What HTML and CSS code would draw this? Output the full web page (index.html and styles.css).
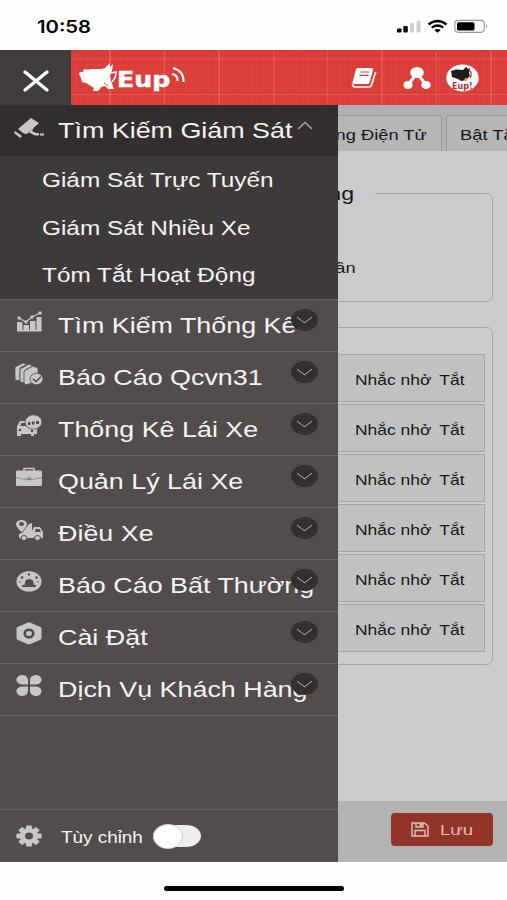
FILE: index.html
```html
<!DOCTYPE html>
<html lang="vi">
<head>
<meta charset="utf-8">
<title>Eup</title>
<link rel="stylesheet" href="styles.css">
</head>
<body>
<div class="phone">
  <div class="status">
    <span class="clock"><span class="t">10:58</span></span>
    <svg class="status-icons" width="92" height="16" viewBox="0 0 92 16">
      <rect x="0" y="9.500" width="4.500" height="4" rx="1"/><rect x="6.300" y="7" width="4.500" height="6.500" rx="1"/>
      <rect x="13" y="4" width="4" height="9.500" rx="1" fill="#d0d0d0"/><rect x="19.500" y="1.500" width="4" height="12" rx="1" fill="#d0d0d0"/>
      <g fill="none" stroke="#000" stroke-width="2.300"><path d="M31.500 5.500Q40.500-1.500 49.500 5.500"/><path d="M34.700 8.700Q40.500 4.300 46.300 8.700"/></g>
      <path d="M37.300 11Q40.500 8.800 43.700 11L40.500 13.800Z"/>
      <rect x="57.800" y="1.300" width="29.500" height="12" rx="3.500" fill="none" stroke="#999" stroke-width="1.200"/>
      <rect x="60" y="3.200" width="17.500" height="8.200" rx="1.500"/><path d="M89 5.300q2.200 2 0 4z" fill="#999"/>
    </svg>
  </div>

  <header class="header">
    <button class="close" aria-label="Đóng">
      <svg width="28" height="24" viewBox="0 0 28 24"><path d="M3 3L25 21M25 3L3 21" stroke="#fff" stroke-width="3.400" stroke-linecap="round"/></svg>
    </button>
    <div class="brand">
      <svg class="pig" width="38" height="30" viewBox="0 0 38 30">
        <path fill="#fff" d="M0 11Q0 8 4 9L5 6Q9 7 12 6H22L26 5L31 0L31 4L34 1L33 8L31 12L32 18L35 26H29L26 23L22 24L21 26L19 28H14L15 25L12 23L7 20L3 19L2 15Z"/>
        <path d="M32 10L37 9Q37 15 33 19" stroke="#fff" stroke-width="1.500" fill="none"/><path d="M25 20l4 3" stroke="#dc3c38"/>
      </svg>
      <span class="brand-name"><span>Eup</span></span>
      <svg class="waves" width="15" height="18" viewBox="0 0 15 18"><g fill="none" stroke="#fff" stroke-width="2"><path d="M1 8q6 1 5.500 7"/><path d="M2 2q11 3 10.500 14"/></g></svg>
    </div>
    <nav class="actions">
      <svg width="26" height="22" viewBox="0 0 26 22">
        <path d="M6.500 1H20.500Q22.500 1 22 3L18.500 15.500Q18 17 16.500 17H3Q1 17 1.500 15L5 2.500Q5.300 1 6.500 1Z" fill="#fff"/>
        <path d="M9.500 5H18.500M8.500 8.300H17.500" stroke="#dc3c38" stroke-width="1.200"/>
        <path d="M1.500 17Q1.500 20 4 20H18Q20 20 20.500 18L24.700 5" fill="none" stroke="#fff" stroke-width="1.700"/>
      </svg>
      <svg width="28" height="24" viewBox="0 0 28 24"><path d="M14 7L5 19M14 7L23 19" stroke="#fff" stroke-width="3"/><g fill="#fff"><ellipse cx="14" cy="6.500" rx="6.800" ry="5.500"/><ellipse cx="5" cy="19" rx="4.700" ry="4"/><ellipse cx="23" cy="19" rx="4.700" ry="4"/></g></svg>
      <svg width="33" height="28" viewBox="0 0 33 28">
        <ellipse cx="16.500" cy="14" rx="16.200" ry="13.500" fill="#fff"/>
        <path d="M5 7L10 5.500L17 6L20 3L22 5L24 4L23 9L24 12L20 16L15 17L12 15L6 13Z" fill="#231a1a"/>
        <path d="M23 6q4 3 1 8" fill="none" stroke="#cc3535" stroke-width="1.300"/><circle cx="20" cy="15.500" r="1.600" fill="#e5a431"/>
        <text x="6" y="24.500" class="mini">Eup!</text>
      </svg>
    </nav>
  </header>

  <main class="stage">
    <div class="page">
      <div class="tabs">
        <div class="tab first"><span class="t right">ng Điện Tử</span></div>
        <div class="tab second"><span class="t">Bật Tắt</span></div>
      </div>
      <div class="content">
        <section class="group top"><h2><span class="t right">ng</span></h2><p><span class="t right">ần</span></p></section>
        <section class="group list">
          <div class="remind"><span class="t">Nhắc nhở <i></i>Tắt</span></div>
          <div class="remind"><span class="t">Nhắc nhở <i></i>Tắt</span></div>
          <div class="remind"><span class="t">Nhắc nhở <i></i>Tắt</span></div>
          <div class="remind"><span class="t">Nhắc nhở <i></i>Tắt</span></div>
          <div class="remind"><span class="t">Nhắc nhở <i></i>Tắt</span></div>
          <div class="remind"><span class="t">Nhắc nhở <i></i>Tắt</span></div>
        </section>
      </div>
      <div class="savebar">
        <button class="save">
          <svg width="18" height="15" viewBox="0 0 18 15"><g fill="none" stroke="#dfbeb9" stroke-width="1.400"><path d="M1 1H13.500L17 4V14H1Z"/><path d="M4 14V8.500H14V14M5 1V5H12V1"/></g><path d="M8.500 1h3v3h-3z" fill="#dfbeb9"/></svg>
          <span class="t">Lưu</span>
        </button>
      </div>
    </div>

    <aside class="drawer">
      <div class="item open">
        <svg class="ico wide" width="31" height="22" viewBox="0 0 31 22"><g fill="#c9c7c6"><path d="M4 12L17 1L25 6L14 16Q12 18 9 16Z"/><path d="M1 14L8 19L6 21L0 16Z"/><path d="M20 10l-2 4 4 2h3v2.500h-4l-6-3z"/><path d="M26 16.500h4v2h-4z"/></g></svg>
        <span class="t">Tìm Kiếm Giám Sát</span>
        <svg class="up" width="16" height="9" viewBox="0 0 16 9"><path d="M1 8L8 1.500L15 8" fill="none" stroke="#aaa7a6" stroke-width="1.500"/></svg>
      </div>
      <div class="sub">
        <div class="subitem"><span class="t">Giám Sát Trực Tuyến</span></div>
        <div class="subitem"><span class="t">Giám Sát Nhiều Xe</span></div>
        <div class="subitem"><span class="t">Tóm Tắt Hoạt Động</span></div>
      </div>
      <div class="item">
        <svg class="ico" width="28" height="24" viewBox="0 0 28 24"><g fill="#c9c7c6"><path d="M2 12h5.500v9H2zM8.500 15h5.500v6h-5.500zM15 11h5.500v10h-5.500zM21.500 7h5v14h-5z"/><path d="M2 20h24.500v1.500H2z"/><circle cx="4" cy="8" r="1.700"/><circle cx="11" cy="12" r="1.700"/><circle cx="17" cy="7" r="1.700"/><circle cx="25" cy="3" r="1.800"/></g><path d="M4 8L11 12L17 7L25 3" fill="none" stroke="#c9c7c6" stroke-width="1.300"/></svg>
        <span class="t">Tìm Kiếm Thống Kê</span><span class="down"></span>
      </div>
      <div class="item">
        <svg class="ico" width="28" height="24" viewBox="0 0 28 24"><g fill="#c9c7c6" stroke="#524d4c" stroke-width=".8"><path d="M0 5L8 1L12 2L5 6V19L0 18Z"/><path d="M5 7L14 2L18 4L10 8V21L5 20Z"/><path d="M9 9L18 4L23 6V19L11 23L9 21Z"/><ellipse cx="21.500" cy="17" rx="6.500" ry="5.800"/></g><path d="M18 17l3 2.500 5-5" fill="none" stroke="#524d4c" stroke-width="1.500"/></svg>
        <span class="t">Báo Cáo Qcvn31</span><span class="down"></span>
      </div>
      <div class="item">
        <svg class="ico" width="28" height="24" viewBox="0 0 28 24"><path d="M2 12L5 7H12L15 13H22V20H19V22H16V20H6V22H2Z" fill="#c9c7c6"/><path d="M5 12l1.500-3H11l1.500 3z" fill="#524d4c"/><circle cx="5" cy="16" r="1.300" fill="#524d4c"/><circle cx="17" cy="17" r="1.300" fill="#524d4c"/><ellipse cx="18.500" cy="8" rx="8.500" ry="7.200" fill="#c9c7c6" stroke="#524d4c" stroke-width=".8"/><path d="M13 9.500h2.500M17 9h2.500M21 8.500h3" stroke="#524d4c" stroke-width="3"/></svg>
        <span class="t">Thống Kê Lái Xe</span><span class="down"></span>
      </div>
      <div class="item">
        <svg class="ico" width="28" height="24" viewBox="0 0 28 24"><path d="M9 5V2.500H19V5" fill="none" stroke="#c9c7c6" stroke-width="1.500"/><path d="M2 4.500H25.500Q27 4.500 27 6V18.500Q27 20 25.500 20H2Q1 20 1 18.500V6Q1 4.500 2 4.500Z" fill="#c9c7c6"/><path d="M1 11.500Q14 15.500 27 11.500" fill="none" stroke="#8c8887"/><ellipse cx="14" cy="12.700" rx="2.500" ry="1.500" fill="#8c8887"/></svg>
        <span class="t">Quản Lý Lái Xe</span><span class="down"></span>
      </div>
      <div class="item">
        <svg class="ico" width="28" height="24" viewBox="0 0 28 24"><path d="M1 6A5.600 4.800 0 0 1 12 6Q12 9 6.500 14Q1 9 1 6Z" fill="#c9c7c6"/><ellipse cx="6.500" cy="6" rx="2.500" ry="2.100" fill="#524d4c"/><path d="M7 15L14 6L17 5V13L19 9H25L28 14V20H4V16Z" fill="#c9c7c6"/><path d="M20.500 11h4l1.500 3h-6z" fill="#524d4c"/><g fill="#c9c7c6" stroke="#524d4c"><ellipse cx="9" cy="20" rx="3" ry="2.500"/><ellipse cx="22.500" cy="20" rx="3" ry="2.500"/></g></svg>
        <span class="t">Điều Xe</span><span class="down"></span>
      </div>
      <div class="item">
        <svg class="ico" width="28" height="24" viewBox="0 0 28 24"><ellipse cx="14" cy="11.500" rx="12.500" ry="10.300" fill="#c9c7c6"/><g fill="#524d4c"><path d="M7 17H21V15H19L18 10.500Q14 7.500 10.500 10.500L9.500 15H7Z"/><circle cx="14" cy="4.500" r="1.200"/><circle cx="7" cy="7.500" r="1.300"/><circle cx="21.500" cy="7.500" r="1.300"/><circle cx="5" cy="12" r=".8"/><circle cx="23" cy="12" r=".8"/></g></svg>
        <span class="t">Báo Cáo Bất Thường</span><span class="down"></span>
      </div>
      <div class="item">
        <svg class="ico" width="28" height="24" viewBox="0 0 28 24"><path d="M12.500 .7Q14 0 15.500 .7L25.500 5Q26.500 5.500 26.500 7V16Q26.500 17.200 25.500 17.700L15.500 22Q14 22.700 12.500 22L2.500 17.700Q1.500 17.200 1.500 16V7Q1.500 5.500 2.500 5Z" fill="#c9c7c6"/><ellipse cx="14" cy="11.500" rx="4.300" ry="3.800" fill="none" stroke="#524d4c" stroke-width="2.600"/></svg>
        <span class="t">Cài Đặt</span><span class="down"></span>
      </div>
      <div class="item">
        <svg class="ico" width="28" height="24" viewBox="0 0 28 24"><g fill="#c9c7c6"><path d="M13 10.500V6A5.800 4.700 0 1 0 7 10.500Z"/><path d="M15 10.500V6A5.800 4.700 0 1 1 21 10.500Z"/><path d="M13 12.500V17A5.800 4.700 0 1 1 7 12.500Z"/><path d="M15 12.500V17A5.800 4.700 0 1 0 21 12.500Z"/></g></svg>
        <span class="t">Dịch Vụ Khách Hàng</span><span class="down"></span>
      </div>
      <div class="drawer-foot">
        <svg class="gear" width="28" height="24" viewBox="-14 -12 28 24"><g fill="#c9c7c6" transform="scale(1.200 1)"><rect x="-2.500" y="-10.500" width="5" height="21" rx="1"/><rect x="-2.500" y="-10.500" width="5" height="21" rx="1" transform="rotate(45)"/><rect x="-2.500" y="-10.500" width="5" height="21" rx="1" transform="rotate(90)"/><rect x="-2.500" y="-10.500" width="5" height="21" rx="1" transform="rotate(135)"/><circle r="7.800"/></g><ellipse rx="4" ry="3.400" fill="#524d4c"/></svg>
        <span class="t">Tùy chỉnh</span>
        <span class="switch"><span class="knob"></span></span>
      </div>
    </aside>
  </main>
  <div class="home"><span></span></div>
</div>
</body>
</html>
```
FILE: styles.css
```css
* { box-sizing: border-box; }
body { margin: 0; background: #fefefe; font-family: "Liberation Sans", Arial, sans-serif; }
button { border: 0; padding: 0; font: inherit; }
.phone { width: 507px; height: 900px; display: flex; flex-direction: column; overflow: hidden; }
.t { display: inline-block; white-space: nowrap; transform: scaleX(1.22); transform-origin: left center; }
.t.right { transform-origin: right center; }

.status { height: 50px; flex: none; display: flex; justify-content: space-between; padding: 17px 18px 0 37px; }
.clock { font: 600 17px/20px Inter, sans-serif; }
.clock .t { transform: scaleX(1.19); }
.status-icons { margin-top: 2px; }

.header {
  height: 55px; flex: none; display: flex; align-items: center;
  background-color: #dc3c38;
  background-image:
    repeating-linear-gradient(90deg, transparent 0 53px, rgba(255,255,255,.12) 53px 54.400px),
    linear-gradient(transparent 9px, rgba(255,255,255,.1) 9px 10px, transparent 10px 44px, rgba(255,255,255,.14) 44px 45px, transparent 45px),
    repeating-linear-gradient(90deg, transparent 0 10px, rgba(255,255,255,.04) 10px 11px),
    repeating-linear-gradient(transparent 0 7px, rgba(255,255,255,.04) 7px 8px);
  background-position: 2px 0, 0 0, 0 0, 0 0;
}
.close { width: 71px; height: 55px; background: #403c3b; display: flex; align-items: center; justify-content: center; padding-top: 7px; }
.brand { display: flex; align-items: center; padding: 0 0 0 8px; width: 282px; }
.brand-name { width: 53px; font: 900 20.500px/28px "DejaVu Sans", sans-serif; color: #fff; padding-top: 5px; }
.brand-name span { display: inline-block; transform: scaleX(1.230); transform-origin: left; -webkit-text-stroke: .5px #fff; }
.waves { margin: -6px 0 0 1px; }
.actions { display: flex; align-items: center; }
.actions svg:nth-child(1) { margin-left: -2px; }
.actions svg:nth-child(2) { margin-left: 26px; }
.actions svg:nth-child(3) { margin-left: 15px; }
.mini { font: 900 8px "DejaVu Sans", sans-serif; fill: #b92f35; }

.stage { height: 757px; flex: none; position: relative; }
.page { height: 757px; display: flex; flex-direction: column; background: #cbcbcb; color: #171717; }
.tabs { height: 46px; flex: none; display: flex; gap: 4px; background: #b1b1b1; padding-top: 10px; overflow: hidden; }
.tab { height: 36px; flex: none; border: 1px solid #9d9d9d; border-bottom: 0; border-radius: 3px 3px 0 0; background: #b6b6b6; font-size: 15px; line-height: 38px; }
.tab.first { width: 442px; text-align: right; padding-right: 14px; }
.tab.second { width: 100px; padding-left: 13px; }
.content { flex: 1; padding: 42px 14px 0 20px; }
.group { border: 1px solid #a4a4a4; border-radius: 6px; }
.top { height: 109px; margin-bottom: 25px; }
.top h2 { width: 354px; margin: -11px 0 0; padding-right: 21px; font-size: 19px; line-height: 22px; font-weight: 400; text-align: right; background: #cbcbcb; }
.top p { margin: 53px 0 0; width: 335px; font-size: 15px; line-height: 20px; text-align: right; }
.list { height: 338px; padding: 26px 7px 0; display: flex; flex-direction: column; gap: 2px; }
.remind { height: 48px; flex: none; border: 1px solid #a3a3a3; background: #c1c1c1; padding-left: 325.500px; font-size: 14.300px; line-height: 51px; }
.remind i { display: inline-block; width: 2.500px; }
.savebar { height: 61px; flex: none; background: #b3b3b3; padding: 12px 14px 0; display: flex; justify-content: flex-end; }
.save { width: 102px; height: 33px; border-radius: 4px; background: #933428; color: #dfbeb9; display: flex; align-items: center; gap: 11px; padding-left: 20px; font-size: 15.500px; }
.save .t { transform: scaleX(1.200); }

.drawer { position: absolute; inset: 0 auto 0 0; width: 338px; background: #524d4c; color: #f5f4f4; display: flex; flex-direction: column; overflow: hidden; }
.item { height: 52px; flex: none; position: relative; display: flex; align-items: center; border-bottom: 1px solid #686765; padding: 0 0 0 15px; font-size: 21.800px; }
.item .t { transform: scaleX(1.233); }
.ico { flex: none; margin: -8px 15px 0 0; }
.ico.wide { margin: -5px 13px 0 -1px; }
.item.open { height: 51px; background: #332f2e; border: 0; }
.up { position: absolute; left: 297px; top: 16px; }
.down { position: absolute; left: 291px; top: 9px; width: 27px; height: 22px; border-radius: 50%; background: #332f2e; display: flex; justify-content: center; align-items: center; }
.down::after { content: ""; width: 10px; height: 10px; border: solid #bbb8b7; border-width: 0 1.800px 1.800px 0; transform: translateY(-3px) scale(1, .75) rotate(45deg); }
.sub { height: 144px; flex: none; background: #3e3a39; border-bottom: 1px solid #686765; }
.subitem { height: 47.700px; padding-left: 42px; font-size: 19.900px; line-height: 49px; }
.subitem .t { transform: scaleX(1.225); }
.drawer-foot { height: 53px; margin-top: auto; border-top: 1px solid #686765; display: flex; align-items: center; padding-left: 15px; font-size: 16px; }
.drawer-foot .t { width: 92px; margin: 3px 0 0 18px; transform: scaleX(1.180); }
.switch { width: 48px; height: 22px; border-radius: 15px/11px; background: #eee; display: flex; align-items: center; }
.knob { width: 30px; height: 25px; flex: none; border-radius: 50%; background: #fff; border: 1px solid #ccc; }
.home { flex: 1; padding: 24px 0 0 164px; }
.home span { display: block; width: 180px; height: 5px; border-radius: 3px; background: #000; }
```
